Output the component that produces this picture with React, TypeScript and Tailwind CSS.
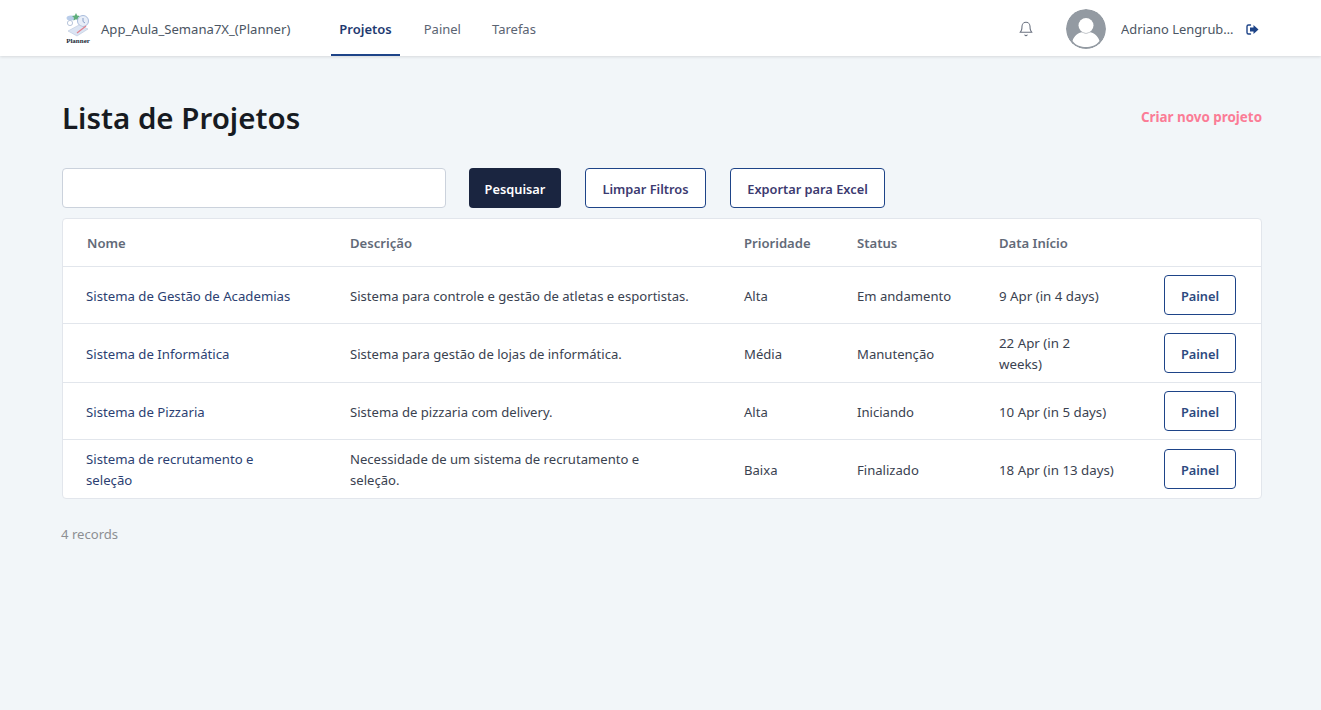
const rows = [
  { nome: "Sistema de Gestão de Academias", descricao: "Sistema para controle e gestão de atletas e esportistas.", prioridade: "Alta", status: "Em andamento", data: "9 Apr (in 4 days)", h: "h-[57px]" },
  { nome: "Sistema de Informática", descricao: "Sistema para gestão de lojas de informática.", prioridade: "Média", status: "Manutenção", data: "22 Apr (in 2 weeks)", h: "h-[59px]" },
  { nome: "Sistema de Pizzaria", descricao: "Sistema de pizzaria com delivery.", prioridade: "Alta", status: "Iniciando", data: "10 Apr (in 5 days)", h: "h-[57px]" },
  { nome: "Sistema de recrutamento e seleção", descricao: "Necessidade de um sistema de recrutamento e seleção.", prioridade: "Baixa", status: "Finalizado", data: "18 Apr (in 13 days)", h: "h-[59px]" },
];

function PlannerLogo() {
  return (
    <div className="flex w-[26px] flex-col items-center">
      <svg width="26" height="26" viewBox="0 0 26 26">
        <ellipse cx="6" cy="6" rx="4.5" ry="2.5" fill="#b9cdea" />
        <circle cx="5" cy="11" r="2.6" fill="#fff" stroke="#b9c6dc" />
        <path d="M11 1l1.2 2.6 2.8.3-2 1.9.5 2.8-2.5-1.4-2.5 1.4.5-2.8-2-1.9 2.8-.3z" fill="#5fae7a" />
        <circle cx="18" cy="9" r="5.5" fill="#e8eef8" stroke="#a9bcdc" />
        <path d="M18 6v3.5l2 1.5" fill="none" stroke="#8aa0c8" strokeWidth="1" />
        <path d="M3 19l11-6 9 4-11 7z" fill="#dbe4f3" stroke="#b9c6dc" strokeWidth="0.6" />
        <path d="M12 21l9-7" stroke="#e2808c" strokeWidth="1.2" />
      </svg>
      <span className="-mt-[1px] font-['Liberation_Serif',serif] text-[7px] leading-[8px] font-bold text-[#222b3a]">Planner</span>
    </div>
  );
}

function Avatar() {
  return (
    <svg width="40" height="40" viewBox="0 0 40 40" className="rounded-full">
      <circle cx="20" cy="20" r="20" fill="#939aa2" />
      <circle cx="20" cy="16.5" r="7.5" fill="#fff" />
      <path d="M6.5 32c1.5-5.5 6-8.500 9.500-8.800 2.500 1.600 5.500 1.600 8 0 3.500.3 8 3.300 9.500 8.800-3.500 4.600-8.500 6-13.500 6s-10-1.400-13.500-6z" fill="#fff" />
    </svg>
  );
}

export default function App() {
  return (
    <div className="min-h-[710px] bg-[#f2f6f9] font-['Noto_Sans',sans-serif] text-[13.1px] text-[#3a4250]">
      <header className="flex h-14 items-center bg-white pr-[62px] pl-[65px] shadow-[0_1px_3px_rgba(0,0,0,0.12)]">
        <PlannerLogo />
        <span className="ml-[10px] pt-1 text-[#4b5563]">App_Aula_Semana7X_(Planner)</span>
        <nav className="ml-[41px] flex h-full text-[13px]">
          <a className="flex items-center border-b-2 border-[#1e4488] px-2 pt-[5px] font-semibold text-[#1e3a70]">Projetos</a>
          <a className="ml-4 flex items-center px-2 pt-1 text-[#5b6472]">Painel</a>
          <a className="ml-[15px] flex items-center px-2 pt-1 text-[#5b6472]">Tarefas</a>
        </nav>
        <div className="ml-auto flex items-center pt-[2px]">
          <svg width="16" height="16" viewBox="0 0 24 24" fill="none" stroke="#6b7280" strokeWidth="1.6" strokeLinecap="round" strokeLinejoin="round">
            <path d="M18 8a6 6 0 0 0-12 0c0 7-3 9-3 9h18s-3-2-3-9" />
            <path d="M13.700 21a2 2 0 0 1-3.400 0" />
          </svg>
          <div className="ml-8"><Avatar /></div>
          <span className="ml-[15px] w-[114px] truncate pt-[2px] text-[12.9px] text-[#4b5563]">Adriano Lengruber</span>
          <svg width="13" height="11" viewBox="0 0 13 11" className="ml-[11px]">
            <path d="M4.500 1H2.500A1.500 1.500 0 0 0 1 2.500v6A1.500 1.500 0 0 0 2.500 10h2" fill="none" stroke="#1e4488" strokeWidth="1.400" strokeLinecap="round" />
            <path d="M7.500 1l5 4.500-5 4.500V7.500H4v-4h3.500z" fill="#1e4488" />
          </svg>
        </div>
      </header>

      <main className="pr-[59px] pl-[62px]">
        <div className="flex items-center justify-between pt-[39px]">
          <h1 className="text-[29.5px] leading-[46px] font-semibold text-[#171b22]">Lista de Projetos</h1>
          <a className="pb-[2px] text-[13.4px] font-bold text-[#fb7c96]">Criar novo projeto</a>
        </div>

        <div className="mt-[27px] flex items-center text-[12.8px]">
          <input className="h-10 w-[384px] rounded border border-[#cbd2dc] bg-white" />
          <button className="ml-[23px] h-10 w-[92px] rounded bg-[#1a2540] pt-1 font-semibold text-white">Pesquisar</button>
          <button className="ml-6 h-10 w-[121px] rounded border border-[#1e4488] bg-white pt-1 font-semibold text-[#3c3a70]">Limpar Filtros</button>
          <button className="ml-6 h-10 w-[155px] rounded border border-[#1e4488] bg-white pt-1 font-semibold text-[#3c3a70]">Exportar para Excel</button>
        </div>

        <div className="mt-[10px] overflow-hidden rounded border border-[#e2e6ec] bg-white">
          <table className="w-full table-fixed border-collapse text-left">
            <colgroup>
              <col className="w-[263px]" />
              <col className="w-[394px]" />
              <col className="w-[113px]" />
              <col className="w-[142px]" />
              <col className="w-[165px]" />
              <col />
            </colgroup>
            <thead>
              <tr className="h-[47px] text-[#626a78]">
                <th className="pt-1 pl-6 font-semibold">Nome</th>
                <th className="pt-1 pl-6 font-semibold">Descrição</th>
                <th className="pt-1 pl-6 font-semibold">Prioridade</th>
                <th className="pt-1 pl-6 font-semibold">Status</th>
                <th className="pt-1 pl-6 font-semibold">Data Início</th>
                <th />
              </tr>
            </thead>
            <tbody>
              {rows.map((row) => (
                <tr key={row.nome} className={`border-t border-[#e2e6ec] leading-[21px] ${row.h}`}>
                  <td className="pt-[3px] pr-7 pl-[23px] text-[13.2px] text-[#2c3f72]">{row.nome}</td>
                  <td className="pt-[3px] pr-[29px] pl-6">{row.descricao}</td>
                  <td className="pt-[3px] pl-6">{row.prioridade}</td>
                  <td className="pt-[3px] pl-6">{row.status}</td>
                  <td className="pt-[3px] pr-[25px] pl-6 text-[13.3px]">{row.data}</td>
                  <td className="pl-6">
                    <button className="h-10 w-[72px] rounded border border-[#1e4488] pt-1 text-[12.8px] font-semibold text-[#2d4a80]">Painel</button>
                  </td>
                </tr>
              ))}
            </tbody>
          </table>
        </div>

        <p className="mt-[26px] -ml-px text-[#8d8f93]">4 records</p>
      </main>
    </div>
  );
}
